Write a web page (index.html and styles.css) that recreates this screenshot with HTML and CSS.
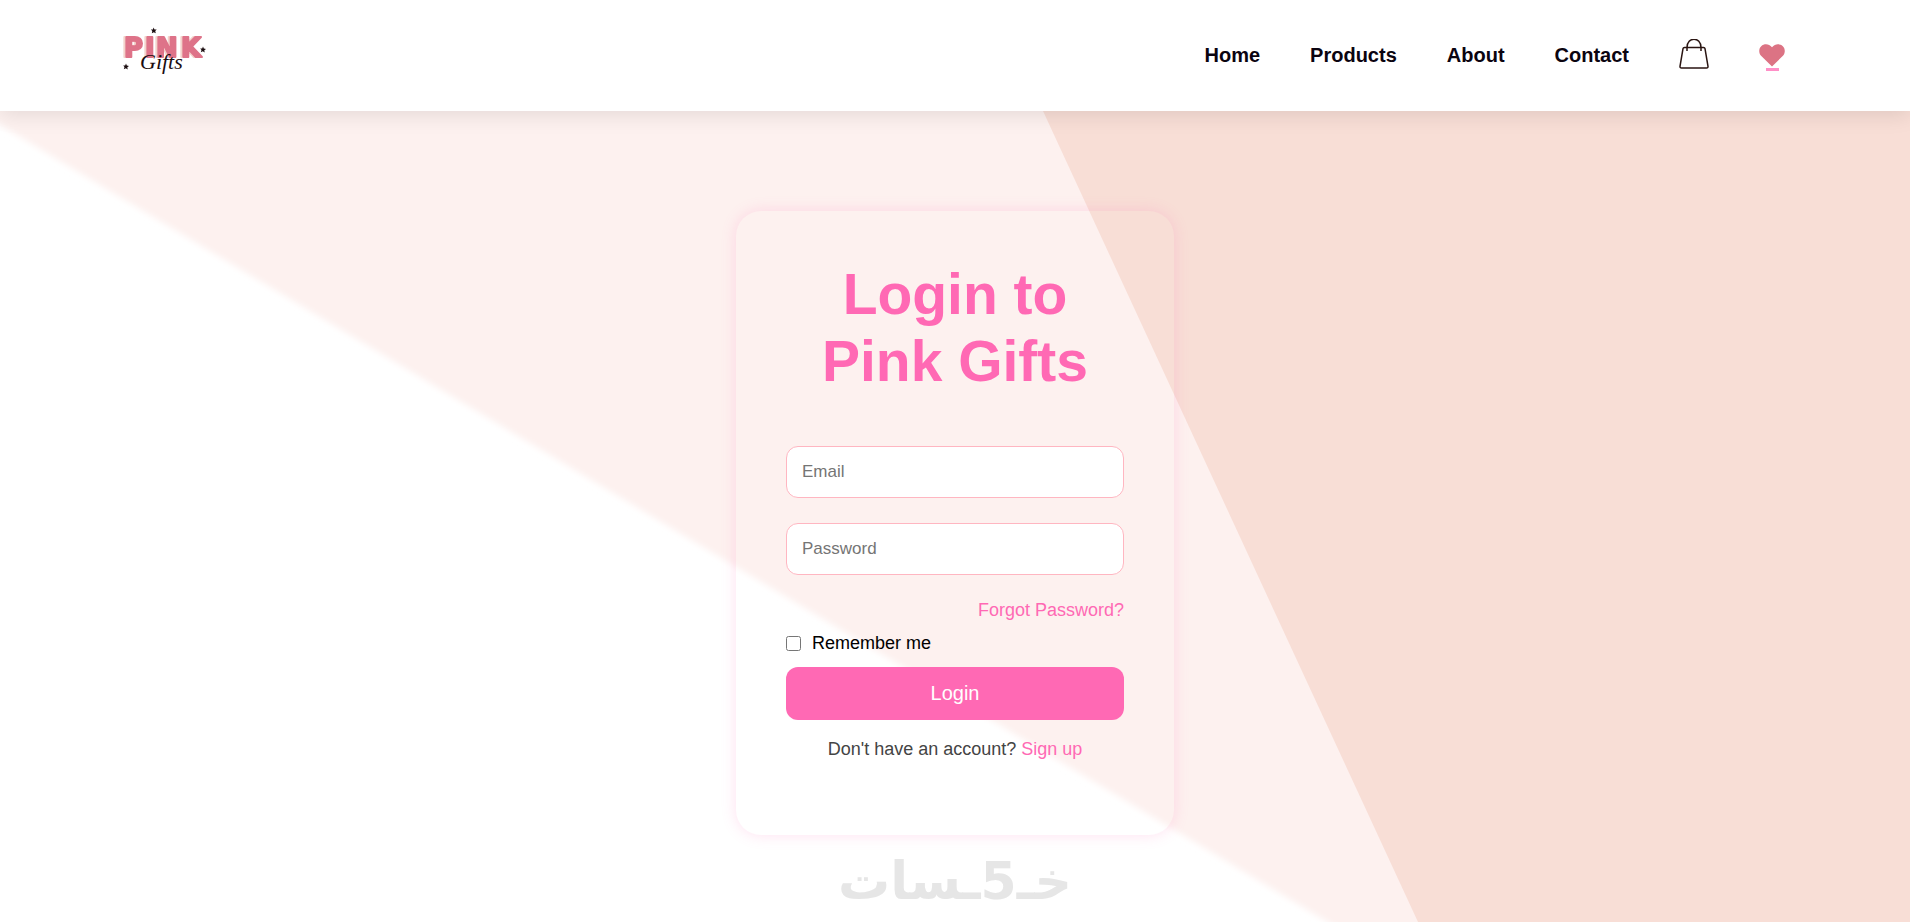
FILE: index.html
```html
<!DOCTYPE html>
<html lang="en">
<head>
    <meta charset="UTF-8">
    <meta name="viewport" content="width=device-width, initial-scale=1.0">
    <title>Pink Gifts - Login</title>
    <link rel="stylesheet" href="styles.css">
</head>
<body>
    <header class="header">
        <a href="#" class="logo" aria-label="Pink Gifts">
            <svg viewBox="0 0 90 60" width="90" height="60">
                <text x="4 25 36 61" y="31" class="logo-pink">PINK</text>
                <text x="20" y="43" class="logo-gifts">Gifts</text>
                <!-- Stars -->
                <path class="logo-star" d="M33.500 1.500l1 2 2.200 0-1.500 1.600.6 2.200-2-1-2 1 .5-2.300-1.400-1.500 2 0z"/>
                <path class="logo-star" d="M83 20.500l.8 2 2.200.4-1.700 1.300.4 2.200-1.900-1.100-2 .9.700-2.200-1.300-1.400 2-.1z"/>
                <path class="logo-star" d="M6 37.500l.8 2 2.200.4-1.700 1.300.4 2.200-1.900-1.100-2 .9.700-2.200-1.300-1.400 2-.1z"/>
            </svg>
        </a>
        <nav class="nav">
            <a href="#">Home</a>
            <a href="#">Products</a>
            <a href="#">About</a>
            <a href="#">Contact</a>
            <a href="#" class="icon-link" aria-label="Cart">
                <svg viewBox="0 0 30 34" width="30" height="34" class="bag">
                    <path d="M5.500 8.500h19q1.300 0 1.500 1.200l3 17.600q.2 1.700-1.500 1.700h-25q-1.700 0-1.500-1.700l3-17.600q.2-1.200 1.500-1.200z"/>
                    <path d="M8 12v-3.500c0-11 14-11 14 0v3.500"/>
                </svg>
            </a>
            <a href="#" class="icon-link active" aria-label="Favorites">
                <svg viewBox="0 0 26 24" width="26" height="24" class="heart">
                    <path d="M13 22.500L2.300 12C-.6 9-.3 4.500 2.200 2.200 5.200-.7 10-.4 13 3.200c3-3.600 7.800-3.900 10.800-1 2.500 2.300 2.800 6.800-.1 9.800z"/>
                </svg>
            </a>
        </nav>
    </header>

    <main class="page">
        <svg class="page-bg" viewBox="0 0 1910 811" preserveAspectRatio="none" aria-hidden="true">
            <filter id="soft" x="-5%" y="-5%" width="110%" height="110%">
                <feGaussianBlur stdDeviation="3"/>
            </filter>
            <polygon points="-60,-22 -60,-60 1970,-60 1970,870 1426,870" fill="#fdf1ef" filter="url(#soft)"/>
            <polygon points="1043,0 1910,0 1910,811 1418,811" fill="#f8ded6"/>
        </svg>

        <form class="login-card">
            <h1>Login to Pink Gifts</h1>
            <input type="email" class="field" placeholder="Email" aria-label="Email">
            <input type="password" class="field" placeholder="Password" aria-label="Password">
            <a href="#" class="forgot">Forgot Password?</a>
            <div class="remember">
                <input type="checkbox" id="remember">
                <label for="remember">Remember me</label>
            </div>
            <button type="submit" class="login-btn">Login</button>
            <p class="signup">Don't have an account? <a href="#">Sign up</a></p>
        </form>

        <p class="watermark" lang="ar" dir="rtl">خـ5ـسات</p>
    </main>
</body>
</html>
```
FILE: styles.css
```css
* {
    box-sizing: border-box;
    margin: 0;
    padding: 0;
}
body {
    font-family: "Liberation Sans", Arial, sans-serif;
    background-color: white;
    color: black;
    min-height: 100vh;
    display: flex;
    flex-direction: column;
}
a {
    color: #ff69b4;
    text-decoration: none;
}

/* Header */
.header {
    display: flex;
    justify-content: space-between;
    align-items: center;
    height: 111px;
    padding: 0 125px 0 120px;
    background: white;
    box-shadow: 0 4px 20px rgba(0, 0, 0, 0.1);
    position: relative;
    z-index: 1;
}
.logo svg {
    display: block;
}
.logo-pink {
    font-family: "DejaVu Sans", sans-serif;
    font-weight: bold;
    font-size: 26px;
    fill: #de7389;
    stroke: #de7389;
    stroke-width: 2;
    stroke-linejoin: round;
    filter: drop-shadow(-2px 0 0 #f3d3cb);
}
.logo-gifts {
    font-family: "Liberation Serif", serif;
    font-style: italic;
    font-size: 22px;
    fill: #1b0d10;
}
.logo-star {
    fill: #1b0d10;
}
.nav {
    display: flex;
    align-items: center;
    gap: 50px;
}
.nav a {
    color: #0b0410;
    font-size: 20px;
    font-weight: bold;
}
.icon-link {
    position: relative;
}
.icon-link svg {
    display: block;
}
.icon-link.active::after {
    content: "";
    position: absolute;
    left: 25%;
    bottom: -3px;
    width: 50%;
    height: 3px;
    background: #ff8fc7;
}
.bag {
    fill: none;
    stroke: #2a1512;
    stroke-width: 1.5;
}
.heart {
    fill: #dc7384;
}

/* Page */
.page {
    flex: 1;
    display: flex;
    flex-direction: column;
    align-items: center;
    gap: 16px;
    padding: 100px 20px 10px;
    position: relative;
}
.page-bg {
    position: absolute;
    inset: 0;
    width: 100%;
    height: 100%;
    z-index: -1;
}

/* Login card */
.login-card {
    display: flex;
    flex-direction: column;
    width: 100%;
    max-width: 438px;
    padding: 50px 50px 76px;
    border-radius: 25px;
    box-shadow: 0 0 15px rgba(255, 105, 180, 0.2);
}
h1 {
    margin: 0 20px 51px;
    color: #ff69b4;
    font-size: 57px;
    line-height: 67px;
    text-align: center;
}
.field {
    width: 100%;
    height: 52px;
    margin-bottom: 25px;
    padding: 0 15px;
    border: 1px solid #ffb6c1;
    border-radius: 12px;
    background: white;
    font-family: inherit;
    font-size: 17px;
}
.forgot {
    align-self: flex-end;
    font-size: 18px;
    line-height: 20px;
}
.remember {
    display: flex;
    align-items: center;
    gap: 11px;
    margin: 13px 0 14px;
    font-size: 18px;
    line-height: 20px;
}
.remember input {
    width: 15px;
    height: 15px;
}
.login-btn {
    height: 53px;
    border: none;
    border-radius: 12px;
    background: #ff69b4;
    color: white;
    font-family: inherit;
    font-size: 20px;
    cursor: pointer;
}
.signup {
    margin-top: 19px;
    color: #444;
    font-size: 18px;
    line-height: 20px;
    text-align: center;
}

.watermark {
    color: #e6e6e6;
    font-family: "DejaVu Sans", sans-serif;
    font-weight: bold;
    font-size: 52px;
    line-height: 60px;
}
```
